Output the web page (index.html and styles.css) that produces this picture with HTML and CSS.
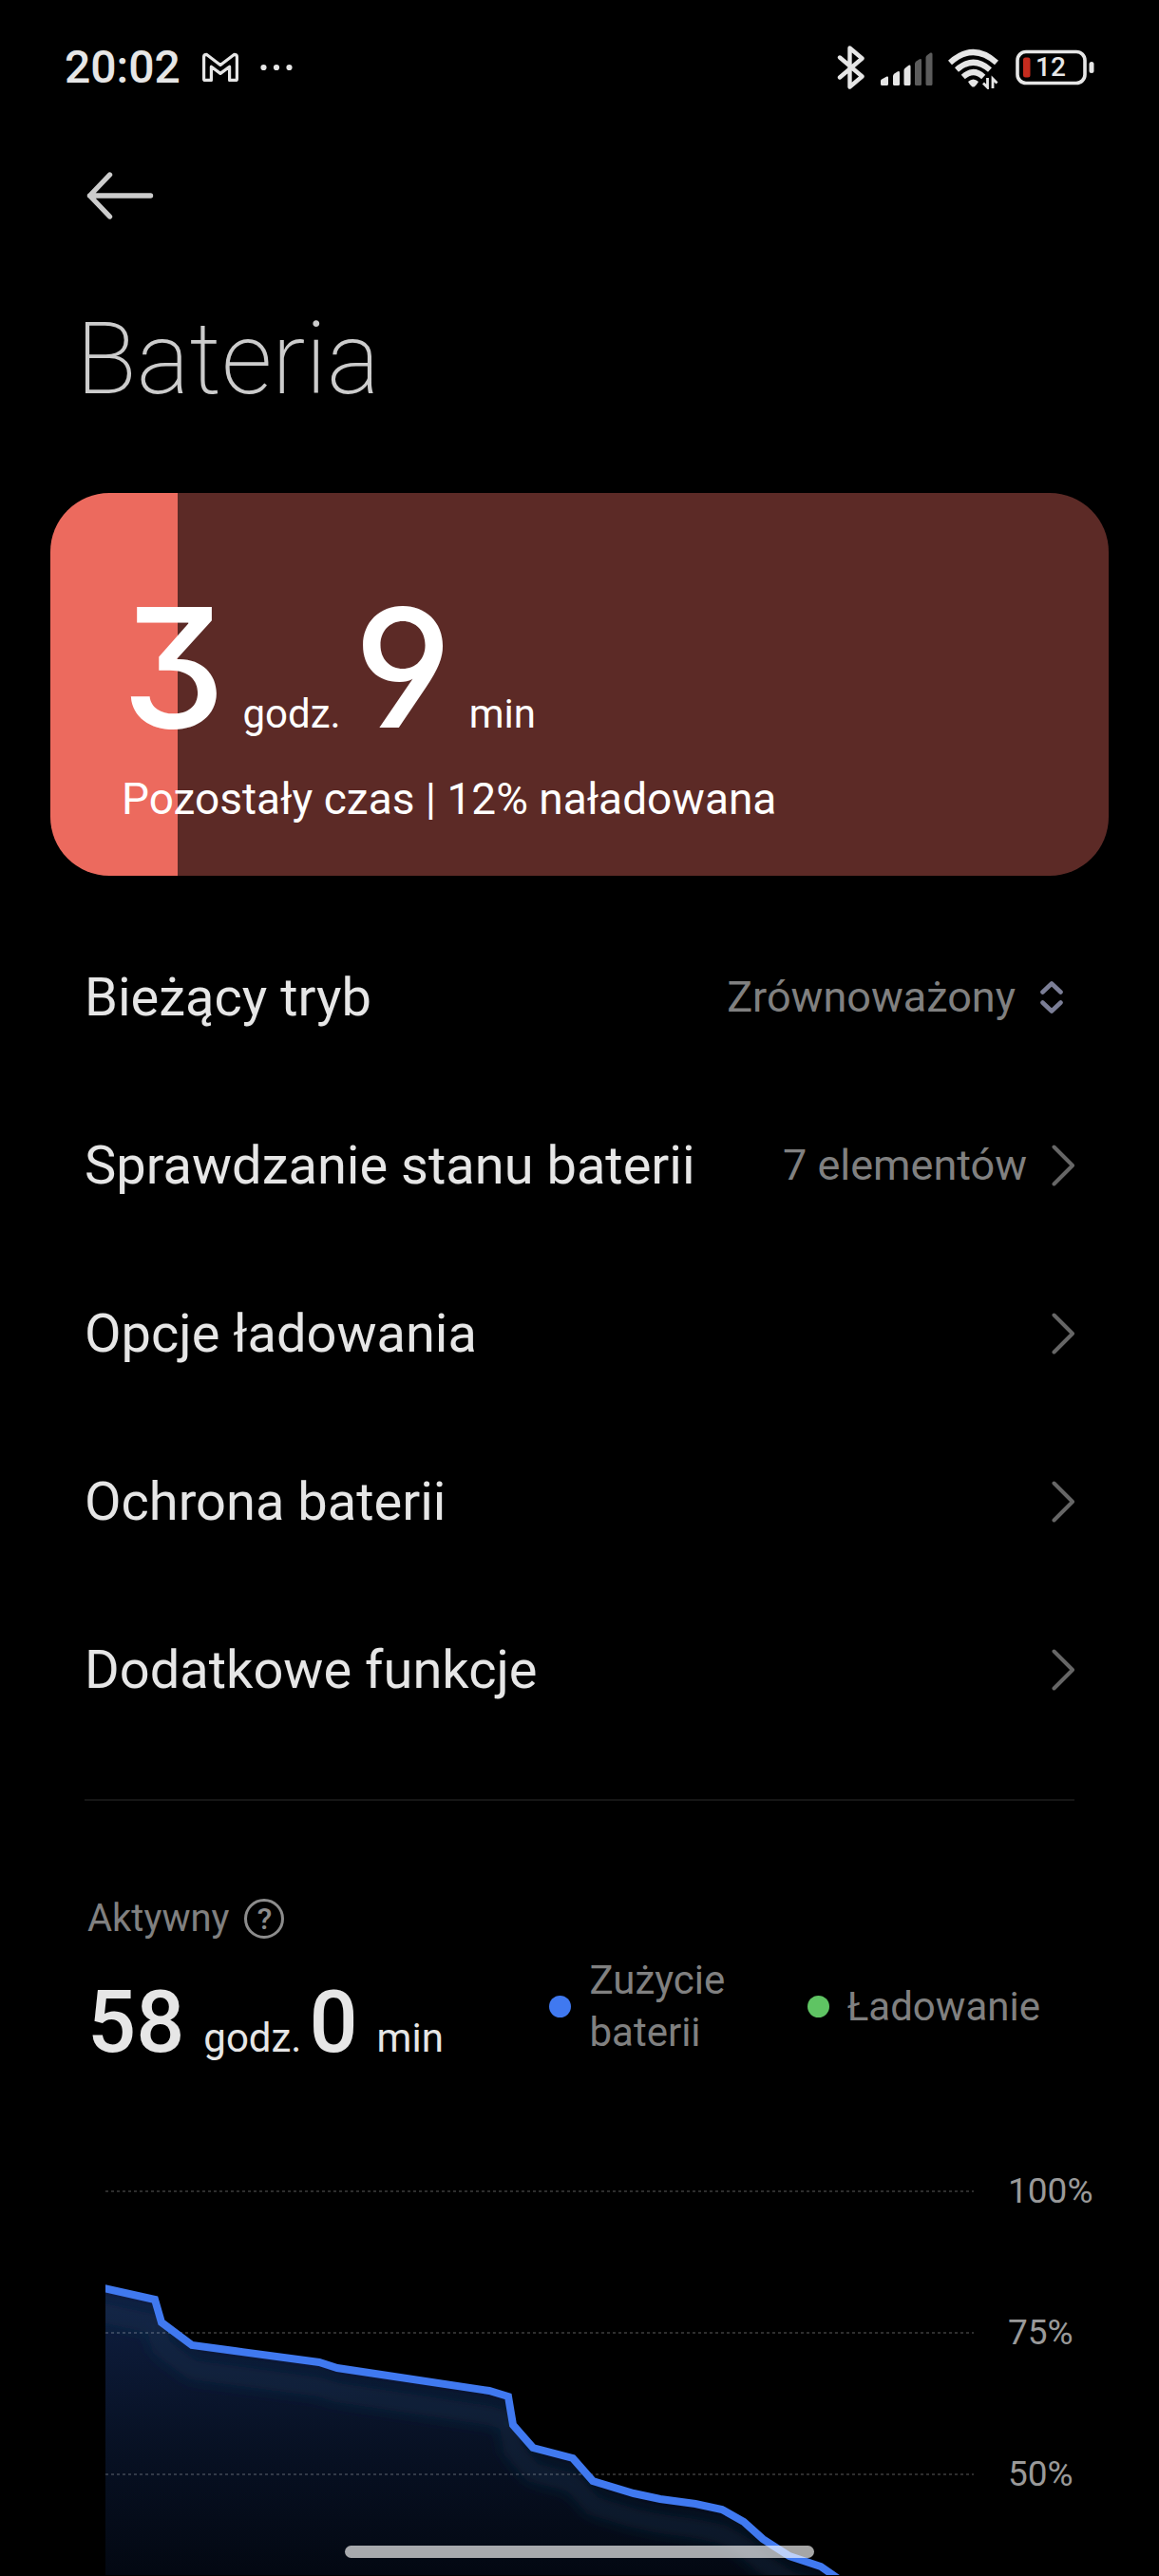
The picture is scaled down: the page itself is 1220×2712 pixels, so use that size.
FILE: index.html
```
<!DOCTYPE html>
<html lang="pl">
<head>
<meta charset="utf-8">
<meta name="viewport" content="width=device-width">
<title>Bateria</title>
<link rel="stylesheet" href="styles.css">
</head>
<body>
<div class="screen">
  <header class="status-bar">
    <div class="status-group status-left">
      <time class="clock">20:02</time>
      <svg class="icon" width="40" height="32" viewBox="0 0 40 32" fill="none" stroke="#e6e6e6" stroke-width="3.2" stroke-linejoin="round"><path d="M2.6 4.8V28.2Q2.6 29.4 3.8 29.4H10.4V15.2L20 22.4L29.6 15.2V29.4H36.2Q37.4 29.4 37.4 28.2V4.8Q37.4 2.4 34.4 2.4L20 13.4L5.6 2.4Q2.6 2.4 2.6 4.8Z"/></svg>
      <svg class="icon" width="34" height="8" viewBox="0 0 34 8" fill="#e6e6e6"><circle cx="3.5" cy="4" r="3.1"/><circle cx="17" cy="4" r="3.1"/><circle cx="30.500" cy="4" r="3.1"/></svg>
    </div>
    <div class="status-group status-right">
      <svg class="icon" width="30" height="46" viewBox="0 0 30 46" fill="none" stroke="#e6e6e6" stroke-width="4.4" stroke-linecap="round" stroke-linejoin="round"><path d="M3 12.500L26.500 32.500L13.500 43.500V2.500L26.500 13.500L3 33.500"/></svg>
      <svg class="icon" width="55" height="46" viewBox="1 0 55 46"><g fill="#e6e6e6"><path d="M1 37Q1 36 2 35.500L7.500 32.600Q9 32.200 9 33.500V40.500Q9 42 7.500 42H2.500Q1 42 1 40.500Z"/><path d="M14 32Q14 30.500 15.500 29.500L19 27.200Q21 26.500 21 28.500V40.500Q21 42 19.500 42H15.500Q14 42 14 40.500Z"/><path d="M25.500 26Q25.500 24.500 27 23.500L30.500 20.800Q32.500 20 32.500 22V40.500Q32.500 42 31 42H27Q25.500 42 25.500 40.500Z"/></g><g fill="#5c5c5c"><path d="M37 19Q37 17.500 38.500 16.500L42 14.300Q44 13.500 44 15.500V40.500Q44 42 42.500 42H38.500Q37 42 37 40.500Z"/><path d="M48.500 12.500Q48.500 11 50 10L53.500 7.600Q55.500 7 55.500 9V40.500Q55.500 42 54 42H50Q48.500 42 48.500 40.500Z"/></g></svg>
      <svg class="icon" width="54" height="46" viewBox="1 0 54 46" fill="none" stroke="#e6e6e6"><path stroke-width="6" d="M3 18Q27.500-4 52 18"/><path stroke-width="6" d="M10 25.500Q27.500 10 45 25.500"/><path stroke-width="6" d="M16.800 33Q27.500 23 38.200 33"/><path fill="#e6e6e6" stroke="none" d="M22 38Q27.500 33 33 38Q31 41.500 28.800 43.200Q27.500 44 26.200 43.200Q24 41.500 22 38Z"/><path stroke-width="2.800" d="M42.500 34V44L38 39.500M48 45V35L52.500 39.500"/></svg>
      <div class="battery-icon">
        <svg width="84" height="38" viewBox="0 0 84 38"><rect x="3" y="2.500" width="71" height="33" rx="9" fill="none" stroke="#e6e6e6" stroke-width="3.600"/><rect x="9" y="8.500" width="7.500" height="21" rx="2.500" fill="#c42b1e"/><rect x="78.500" y="13" width="5" height="12" rx="2.500" fill="#e6e6e6"/></svg>
        <span class="battery-level">12</span>
      </div>
    </div>
  </header>

  <nav class="toolbar">
    <button class="back" type="button" aria-label="Wstecz">
      <svg width="72" height="50" viewBox="0 0 72 50" fill="none" stroke="#ccc" stroke-width="5.400" stroke-linecap="round" stroke-linejoin="round"><path d="M25.500 3L4.500 25L25.500 47M4.500 25H68.500"/></svg>
    </button>
  </nav>

  <main>
    <h1 class="title">Bateria</h1>

    <section class="charge-card">
      <p class="remaining"><span class="remaining-value">3</span><span class="remaining-unit">godz.</span><span class="remaining-value">9</span><span class="remaining-unit">min</span></p>
      <p class="charge-note">Pozostały czas | 12% naładowana</p>
    </section>

    <ul class="settings">
      <li class="row">
        <label class="row-label" for="mode">Bieżący tryb</label>
        <span class="row-value picker">
          <select id="mode" class="mode-select"><option>Zrównoważony</option></select>
          <svg width="24" height="36" viewBox="0 0 24 36" fill="none" stroke="#7b7e96" stroke-width="4.600" stroke-linecap="round" stroke-linejoin="round"><path d="M2.500 12.500L12 3.500L21.500 12.500M2.500 23.500L12 32.500L21.500 23.500"/></svg>
        </span>
      </li>
      <li><a class="row" href="#stan"><span class="row-label">Sprawdzanie stanu baterii</span><span class="row-value">7 elementów<svg class="chevron" viewBox="0 0 24 44"><path d="M2.500 2.500L22 22L2.500 41.500"/></svg></span></a></li>
      <li><a class="row" href="#ladowanie"><span class="row-label">Opcje ładowania</span><svg class="chevron" viewBox="0 0 24 44"><path d="M2.500 2.500L22 22L2.500 41.500"/></svg></a></li>
      <li><a class="row" href="#ochrona"><span class="row-label">Ochrona baterii</span><svg class="chevron" viewBox="0 0 24 44"><path d="M2.500 2.500L22 22L2.500 41.500"/></svg></a></li>
      <li><a class="row" href="#funkcje"><span class="row-label">Dodatkowe funkcje</span><svg class="chevron" viewBox="0 0 24 44"><path d="M2.500 2.500L22 22L2.500 41.500"/></svg></a></li>
    </ul>

    <hr class="divider">

    <section class="usage">
      <div class="summary">
        <div class="active">
          <div class="active-head">Aktywny<button class="help" type="button" aria-label="Pomoc">?</button></div>
          <p class="active-time"><span class="active-value">58</span><span class="active-unit">godz.</span><span class="active-value">0</span><span class="active-unit">min</span></p>
        </div>
        <div class="legend"><span class="dot dot-usage"></span><span class="legend-text">Zużycie baterii</span></div>
        <div class="legend"><span class="dot dot-charging"></span><span class="legend-text">Ładowanie</span></div>
      </div>

      <div class="chart">
        <svg class="plot" viewBox="111 2284 914 428" preserveAspectRatio="none">
          <defs>
            <linearGradient id="fill" gradientUnits="userSpaceOnUse" x1="0" y1="2410" x2="0" y2="2712">
              <stop offset="0" stop-color="#0f1f42"/><stop offset=".5" stop-color="#081226"/><stop offset="1" stop-color="#030812"/>
            </linearGradient>
            <filter id="soft" x="-10%" y="-10%" width="120%" height="130%"><feGaussianBlur stdDeviation="8"/></filter>
            <clipPath id="area"><path d="M111 2410L163 2422L170 2446L202 2470L247 2476L336 2488L355 2494L515 2518L535 2524L540 2554L561 2578L603 2589L624 2613L667 2626L695 2632L732 2637L760 2643L783 2656L803 2674L831 2692L864 2703L884 2717H111Z"/></clipPath>
          </defs>
          <g clip-path="url(#area)">
            <rect x="111" y="2400" width="914" height="320" fill="url(#fill)"/>
            <path filter="url(#soft)" fill="none" stroke="#1c3c58" stroke-opacity=".36" stroke-width="20" d="M90 2432L163 2448L170 2472L202 2496L247 2502L336 2514L355 2520L515 2544L535 2550L540 2580L561 2604L603 2615L624 2639L667 2652L695 2658L732 2663L760 2669L783 2682L803 2700L831 2718L864 2729"/>
          </g>
          <path class="grid" d="M111 2308H1025M111 2457H1025M111 2606H1025"/>
          <path class="line" d="M105 2409L163 2422L170 2446L202 2470L247 2476L336 2488L355 2494L515 2518L535 2524L540 2554L561 2578L603 2589L624 2613L667 2626L695 2632L732 2637L760 2643L783 2656L803 2674L831 2692L864 2703L884 2717"/>
        </svg>
        <ul class="scale"><li>100%</li><li>75%</li><li>50%</li></ul>
      </div>
    </section>
  </main>
  <div class="home-bar"></div>
</div>
</body>
</html>
```
FILE: styles.css
```
* { box-sizing: border-box; }

body {
  margin: 0;
  background: #000;
  color: #e6e6e6;
  font-family: Roboto, "Noto Sans", sans-serif;
}

h1, p, ul { margin: 0; padding: 0; font-weight: inherit; }
ul { list-style: none; }
a { color: inherit; text-decoration: none; }
svg { display: block; flex: none; }
button, select {
  margin: 0;
  padding: 0;
  border: 0;
  background: none;
  color: inherit;
  font: inherit;
}

.screen {
  position: relative;
  min-height: 100vh;
  overflow: hidden;
}

/* Status bar */
.status-bar {
  display: flex;
  align-items: center;
  justify-content: space-between;
  height: 142px;
  padding: 0 68px;
}
.status-group { display: flex; align-items: center; }
.status-left { gap: 22px; }
.status-right { gap: 16px; }
.clock { font-size: 48px; font-weight: 500; line-height: 56px; }
.battery-icon { position: relative; }
.battery-level {
  position: absolute;
  inset: 0 8px 0 0;
  font-size: 28px;
  font-weight: 500;
  line-height: 38px;
  text-align: center;
}

/* Toolbar and title */
.toolbar { padding: 32px 90px 0; }
.back { display: flex; align-items: center; height: 64px; }
.title {
  padding: 81px 80px 80px;
  color: #ccc;
  font-size: 105px;
  font-weight: 200;
  line-height: 120px;
}

/* Remaining time card */
.charge-card {
  margin: 0 53px;
  padding: 94px 75px 53px;
  border-radius: 62px;
  background: linear-gradient(to right, #ec6a5e 12%, #5c2a26 12%);
  color: #fff;
}
.remaining { display: flex; align-items: baseline; }
.remaining-value {
  font-family: Inter, sans-serif;
  font-size: 174px;
  font-weight: 500;
  font-feature-settings: "cv04", "cv09";
  line-height: 180px;
}
.remaining-unit { margin: 0 14px 0 18px; font-size: 42px; }
.charge-note {
  margin-top: 20px;
  font-size: 46px;
  line-height: 56px;
}

/* Settings list */
.settings { padding: 39px 89px 0; }
.row {
  display: flex;
  align-items: center;
  justify-content: space-between;
  height: 177px;
}
.row-label { font-size: 56px; line-height: 64px; }
.row-value {
  display: flex;
  align-items: center;
  gap: 26px;
  color: #808080;
  font-size: 45px;
}
.picker { padding-right: 12px; }
.mode-select { appearance: none; text-align-last: right; }
.chevron {
  width: 24px;
  height: 44px;
  fill: none;
  stroke: #666;
  stroke-width: 4;
  stroke-linecap: round;
  stroke-linejoin: round;
}

.divider { height: 2px; margin: 48px 89px 0; border: 0; background: #161616; }

/* Usage summary */
.summary {
  display: grid;
  grid-template-columns: 489fr 271fr 281fr;
  align-items: end;
  padding: 100px 89px 0;
}
.active { padding-left: 3px; }
.active-head {
  display: flex;
  align-items: center;
  gap: 16px;
  color: #808080;
  font-size: 40px;
  line-height: 48px;
}
.help {
  width: 42px;
  height: 42px;
  border: 3px solid #8c8c8c;
  border-radius: 50%;
  color: #8c8c8c;
  font-size: 32px;
  font-weight: 500;
  line-height: 36px;
}
.active-time { display: flex; align-items: baseline; margin-top: 32px; }
.active-value { font-size: 90px; font-weight: 500; line-height: 108px; }
.active-unit { margin: 0 8px 0 20px; font-size: 42px; }
.legend {
  display: flex;
  align-items: center;
  gap: 19px;
  height: 110px;
  margin-bottom: 17px;
  padding-right: 48px;
  color: #808080;
  font-size: 42px;
  line-height: 55px;
}
.legend:last-child { padding-right: 0; }
.dot { flex: none; width: 23px; height: 23px; border-radius: 50%; }
.dot-usage { background: #4079f0; }
.dot-charging { background: #5fc463; }

/* Chart */
.chart { display: flex; padding: 99px 0 0 111px; }
.plot { flex: 1; min-width: 0; height: 428px; }
.grid { fill: none; stroke: #fff; stroke-opacity: .18; stroke-width: 2; stroke-dasharray: 3 3; }
.line { fill: none; stroke: #4079f0; stroke-width: 8; }
.scale {
  width: 195px;
  padding-left: 36px;
  color: #999;
  font-size: 37px;
  line-height: 48px;
}
.scale li { height: 149px; }
.scale li:last-child { height: 48px; }

.home-bar {
  position: absolute;
  bottom: 19px;
  left: 50%;
  width: 494px;
  height: 13px;
  margin-left: -247px;
  border-radius: 7px;
  background: rgba(255, 255, 255, .65);
}
```
